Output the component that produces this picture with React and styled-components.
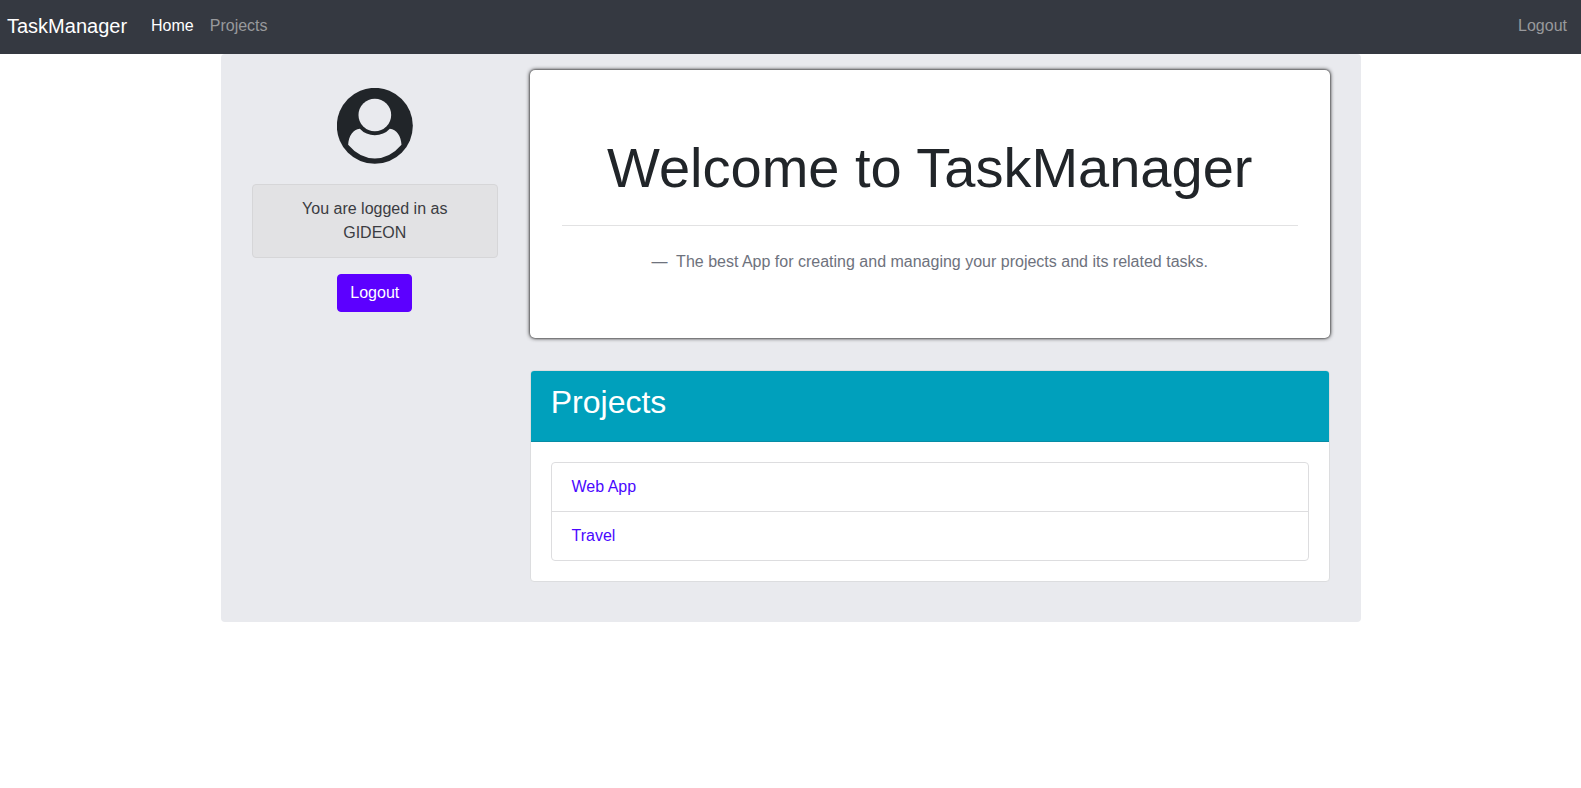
import React from 'react';
import styled, { createGlobalStyle } from 'styled-components';

const GlobalStyle = createGlobalStyle`
  *, *::before, *::after { box-sizing: border-box; }
  body {
    margin: 0;
    background: #fff;
    color: #212529;
    font-family: "Liberation Sans", Arial, sans-serif;
    font-size: 16px;
    line-height: 1.5;
  }
`;

const Navbar = styled.nav`
  display: flex;
  align-items: center;
  height: 54px;
  padding: 0 6px 2px 7px;
  background: #353941;
`;

const Brand = styled.a`
  margin-right: 16px;
  color: #fff;
  font-size: 20px;
  line-height: 30px;
  text-decoration: none;
`;

const NavLinks = styled.div`
  display: flex;
  flex: 1;
`;

const NavLink = styled.a`
  padding: 8px;
  margin-left: ${({ $end }) => ($end ? 'auto' : '0')};
  color: ${({ $active }) => ($active ? '#fff' : '#98999c')};
  text-decoration: none;
`;

const Panel = styled.main`
  display: flex;
  align-items: flex-start;
  gap: 32px;
  width: 1140px;
  height: 568px;
  margin: 0 auto;
  padding: 16px 30.75px 40px 31.25px;
  border-radius: 4px;
  background: #e9eaee;
`;

const Sidebar = styled.aside`
  display: flex;
  flex-direction: column;
  align-items: center;
  width: 246px;
  padding-top: 18px;
`;

const Avatar = styled.svg`
  display: block;
  width: 76px;
  height: 76px;
  margin-bottom: 20px;
`;

const StatusAlert = styled.div`
  width: 100%;
  margin-bottom: 16px;
  padding: 12px 40px;
  border: 1px solid #d6d6d8;
  border-radius: 4px;
  background: #e2e2e4;
  color: #3b3c42;
  text-align: center;
`;

const Button = styled.button`
  height: 38px;
  padding: 6px 12px;
  border: 1px solid #5c00ff;
  border-radius: 4px;
  background: #5c00ff;
  color: #fff;
  font: inherit;
`;

const Content = styled.section`
  width: 800px;
`;

const Welcome = styled.header`
  height: 268px;
  margin-bottom: 32px;
  padding: 64px 32px;
  border-radius: 5px;
  background: #fff;
  box-shadow: 0 0 4px rgba(0, 0, 0, 0.9), 0 0 2px rgba(0, 0, 0, 0.6);
  text-align: center;
`;

const Title = styled.h1`
  margin: 0;
  font-size: 56px;
  font-weight: 400;
  line-height: 1.2;
`;

const Divider = styled.hr`
  margin: 24px 0;
  border: 0;
  border-top: 1px solid #e2e2e3;
`;

const Tagline = styled.p`
  margin: 0;
  color: #6e727d;
`;

const Card = styled.article`
  border: 1px solid #dcdddf;
  border-radius: 4px;
  background: #fff;
  overflow: hidden;
`;

const CardHeader = styled.div`
  height: 71px;
  padding: 12px 20px;
  border-bottom: 1px solid #078ca5;
  background: #00a0bc;
  color: #fff;
`;

const CardTitle = styled.h2`
  margin: 0;
  font-size: 32px;
  font-weight: 400;
  line-height: 1.2;
`;

const ProjectList = styled.ul`
  margin: 20px;
  padding: 0;
  border: 1px solid #dddddf;
  border-radius: 4px;
  list-style: none;
`;

const ProjectItem = styled.li`
  padding: 12px 19.75px;

  & + & { border-top: 1px solid #dddddf; }
`;

const ProjectLink = styled.a`
  color: #4a08ff;
  text-decoration: none;
`;

const projects = ['Web App', 'Travel'];

export default function App() {
  return (
    <>
      <GlobalStyle />
      <Navbar>
        <Brand>TaskManager</Brand>
        <NavLinks>
          <NavLink $active>Home</NavLink>
          <NavLink>Projects</NavLink>
          <NavLink $end>Logout</NavLink>
        </NavLinks>
      </Navbar>
      <Panel>
        <Sidebar>
          <Avatar viewBox="35.5 23.5 228 228" aria-hidden="true">
            <circle cx="149" cy="137" r="114" fill="#212529" />
            <circle cx="149" cy="104.5" r="49" fill="#e9eaee" />
            <path
              d="M104 145.5 A61 61 0 0 0 194 145.5 C214 148 228 167 229 194 Q194 235 149 235 Q104 235 69 194 C70 167 84 148 104 145.5Z"
              fill="#e9eaee"
            />
          </Avatar>
          <StatusAlert>You are logged in as GIDEON</StatusAlert>
          <Button>Logout</Button>
        </Sidebar>
        <Content>
          <Welcome>
            <Title>Welcome to TaskManager</Title>
            <Divider />
            <Tagline>—&nbsp; The best App for creating and managing your projects and its related tasks.</Tagline>
          </Welcome>
          <Card>
            <CardHeader>
              <CardTitle>Projects</CardTitle>
            </CardHeader>
            <ProjectList>
              {projects.map((name) => (
                <ProjectItem key={name}>
                  <ProjectLink>{name}</ProjectLink>
                </ProjectItem>
              ))}
            </ProjectList>
          </Card>
        </Content>
      </Panel>
    </>
  );
}
